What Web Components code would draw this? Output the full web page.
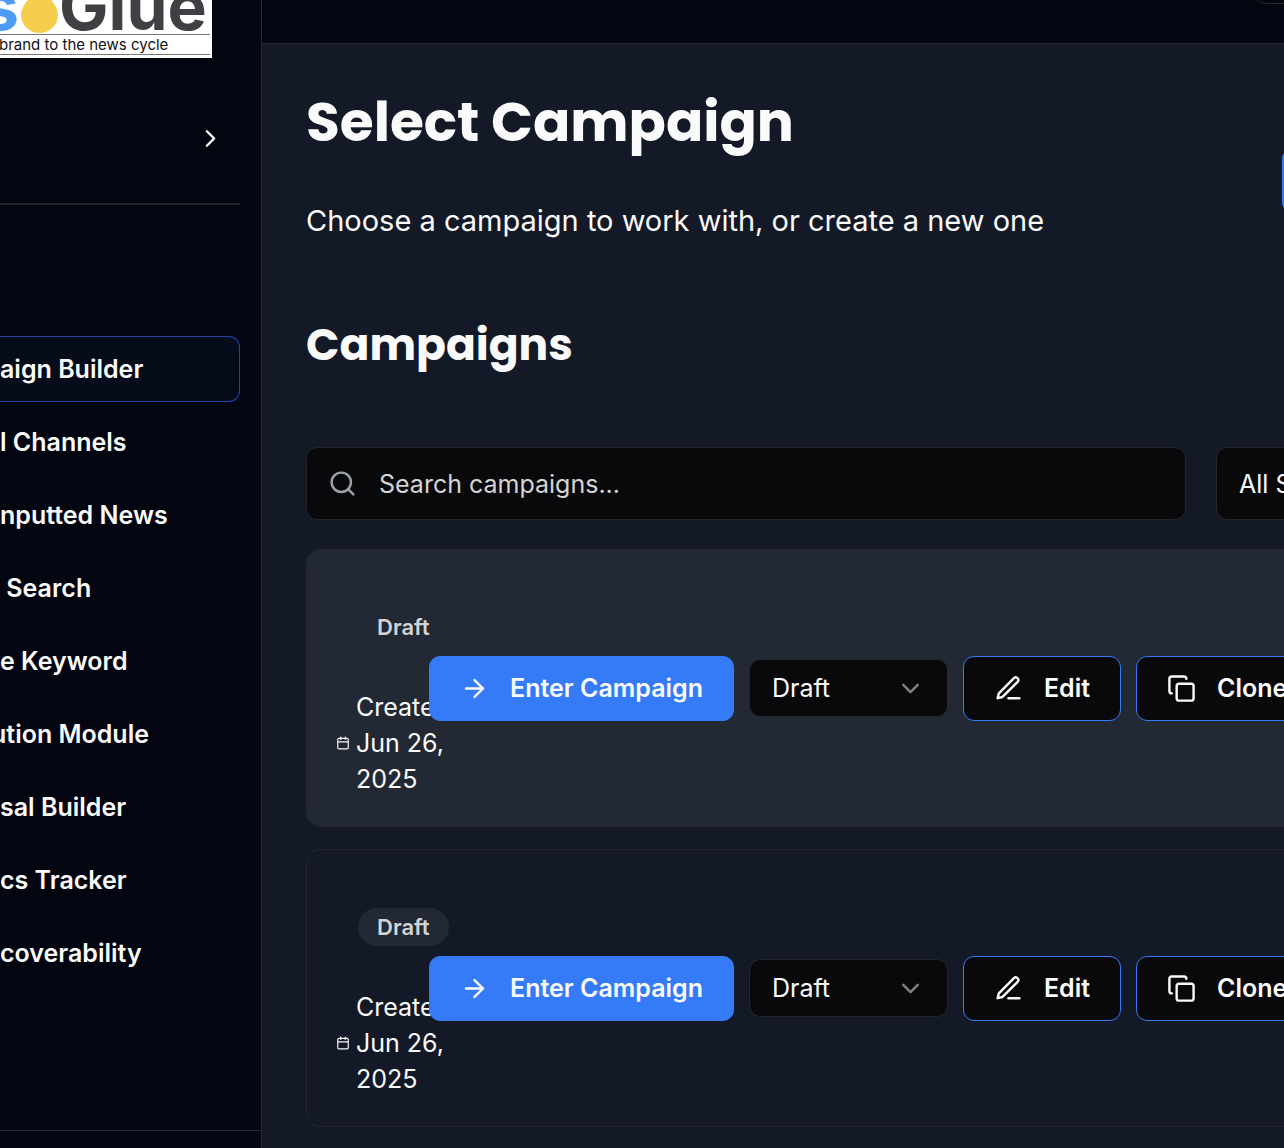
<!DOCTYPE html>
<html lang="en">
<head>
<meta charset="utf-8">
<meta name="viewport" content="width=device-width, initial-scale=1">
<title>Select Campaign</title>
<style>
  :root {
    --bg: #131926; --chrome: #030510; --line: #232935; --edge: #27272a;
    --field: #09090b; --raised: #222935; --text: #fafafa; --muted: #d4d4d4; --blue: #357af6;
  }
  html, body { margin: 0; height: 100%; background: var(--bg); }
  body { font: 400 25px/36px Inter, "Liberation Sans", sans-serif; color: var(--text); }
</style>
</head>
<body>
<app-shell>
  <app-sidebar slot="sidebar"></app-sidebar>
  <app-header slot="header"></app-header>
  <campaign-page></campaign-page>
</app-shell>

<script>
const define = (name, html, setup) => customElements.define(name, class extends HTMLElement {
  constructor() {
    super();
    const t = document.createElement('template');
    t.innerHTML = '<style>:host,*{box-sizing:border-box}:host([hidden]){display:none}</style>' + html;
    this.attachShadow({ mode: 'open' }).append(t.content.cloneNode(true));
  }
  connectedCallback() { if (setup) setup.call(this, this.shadowRoot); }
});

const icons = {
  chevronRight: '<path d="m9 18 6-6-6-6"/>',
  chevronDown: '<path d="m6 9 6 6 6-6"/>',
  search: '<circle cx="11" cy="11" r="8"/><path d="m21 21-4.3-4.3"/>',
  arrow: '<path d="M5 12h14"/><path d="m12 5 7 7-7 7"/>',
  pen: '<path d="M12 20h9"/><path d="M16.5 3.5a2.12 2.12 0 0 1 3 3L7 19l-4 1 1-4Z"/>',
  copy: '<rect width="14" height="14" x="8" y="8" rx="2"/><path d="M4 16c-1.1 0-2-.9-2-2V4c0-1.1.9-2 2-2h10c1.1 0 2 .9 2 2"/>',
  calendar: '<path d="M8 2v4"/><path d="M16 2v4"/><rect width="18" height="18" x="3" y="4" rx="2"/><path d="M3 10h18"/>'
};

define('app-icon', `
  <style>
    :host { display: block; flex: none; width: 29px; height: 29px; }
    svg { display: block; width: 100%; height: 100%; fill: none; stroke: currentColor; stroke-width: 2; stroke-linecap: round; stroke-linejoin: round; }
  </style>
  <svg viewBox="0 0 24 24" aria-hidden="true"></svg>`, function (root) {
  root.querySelector('svg').innerHTML = icons[this.getAttribute('name')];
});

define('app-shell', `
  <style>
    :host { display: flex; height: 100vh; overflow: hidden; }
    .body { flex: 1; min-width: 0; display: flex; flex-direction: column; overflow: hidden; }
    main { flex: 1; min-height: 0; overflow: hidden; }
  </style>
  <slot name="sidebar"></slot>
  <div class="body"><slot name="header"></slot><main><slot></slot></main></div>`);

define('brand-logo', `
  <style>
    :host { display: block; }
    svg { display: block; width: 212px; height: 58px; }
    text { font-family: Inter, "Liberation Sans", sans-serif; }
  </style>
  <svg viewBox="0 0 212 58" role="img" aria-label="Glue, brand to the news cycle">
    <rect width="212" height="58" fill="#fff"/>
    <g font-size="66" font-weight="700">
      <text x="-18" y="30" fill="#4f9bf8">s</text>
      <text x="59" y="30" fill="#3f4044">Glue</text>
    </g>
    <path d="M39.500-14C35-7 21 4 21 15a18.500 18 0 0 0 37 0C58 4 44-7 39.500-14Z" fill="#f5ce4e"/>
    <path d="M0 34.500h210M0 54.500h210" stroke="#777" stroke-width="1"/>
    <text x="-1" y="50" font-size="15" font-weight="400" fill="#111">brand to the news cycle</text>
  </svg>`);

define('nav-link', `
  <style>
    :host { display: block; }
    a { display: flex; align-items: center; height: 66px; border: 1px solid transparent; border-left: 0;
        border-radius: 0 11px 11px 0; color: inherit; font-weight: 600; text-decoration: none; white-space: pre; }
    :host([active]) a { background: #070c1a; border-color: #2341ab; }
    :host([bleed]) a { text-indent: -9px; }
  </style>
  <a href="#"><slot></slot></a>`);

define('app-sidebar', `
  <style>
    :host { display: flex; flex-direction: column; flex: none; width: 262px; overflow: hidden; background: var(--chrome); border-right: 1px solid var(--line); }
    .switch { display: flex; justify-content: flex-end; margin: 44px 21px 0 0; padding: 22px 15px 50px 0; border-bottom: 2px solid var(--edge); }
    button { padding: 0; border: 0; background: none; color: inherit; }
    nav { display: flex; flex-direction: column; gap: 7px; margin: 131px 21px 0 0; }
    footer { margin-top: auto; height: 18px; flex: none; border-top: 1px solid var(--line); }
  </style>
  <brand-logo></brand-logo>
  <div class="switch"><button aria-label="Expand"><app-icon name="chevronRight"></app-icon></button></div>
  <nav>
    <nav-link active>aign Builder</nav-link>
    <nav-link>l Channels</nav-link>
    <nav-link>nputted News</nav-link>
    <nav-link> Search</nav-link>
    <nav-link>e Keyword</nav-link>
    <nav-link bleed>ution Module</nav-link>
    <nav-link>sal Builder</nav-link>
    <nav-link>cs Tracker</nav-link>
    <nav-link>coverability</nav-link>
  </nav>
  <footer></footer>`);

define('app-header', `
  <style>
    :host { display: flex; flex: none; height: 44px; align-items: flex-end; justify-content: flex-end; padding-bottom: 39px;
            background: var(--chrome); border-bottom: 1px solid var(--line); }
    button { flex: none; width: 66px; height: 66px; margin-right: -34px; border: 1px solid var(--edge); border-radius: 14px; background: none; }
  </style>
  <button aria-label="Account"></button>`);

define('action-button', `
  <style>
    :host { display: block; flex: none; }
    button { display: flex; align-items: center; gap: 21px; height: 65px; padding: 0 30px; border: 1px solid var(--blue); border-radius: 11px;
             background: var(--field); color: var(--text); font: inherit; font-weight: 600; white-space: nowrap; }
    :host([primary]) button { background: var(--blue); }
  </style>
  <button><app-icon></app-icon><span><slot></slot></span></button>`, function (root) {
  const old = root.querySelector('app-icon');
  const icon = document.createElement('app-icon');
  icon.setAttribute('name', this.getAttribute('icon'));
  old.replaceWith(icon);
});

define('select-box', `
  <style>
    :host { display: grid; flex: none; align-items: center; width: 199px; height: 58px; }
    select, app-icon { grid-area: 1 / 1; }
    select { width: 100%; height: 100%; padding: 0 22px; border: 1px solid var(--edge); border-radius: 11px; appearance: none;
             background: var(--field); color: var(--text); font: inherit; }
    app-icon { justify-self: end; margin-right: 23px; color: #808080; pointer-events: none; }
  </style>
  <select><option></option></select><app-icon name="chevronDown"></app-icon>`, function (root) {
  root.querySelector('option').textContent = this.getAttribute('value');
  root.querySelector('select').setAttribute('aria-label', this.getAttribute('label'));
});

define('search-box', `
  <style>
    :host { display: block; flex: 1; min-width: 0; }
    label { display: flex; align-items: center; gap: 22px; height: 73px; padding: 0 21px; border: 1px solid var(--edge); border-radius: 11px; background: var(--field); }
    app-icon { color: #9ca3af; }
    input { flex: 1; min-width: 0; padding: 0; border: 0; outline: 0; background: none; color: var(--text); font: inherit; }
    input::placeholder { color: var(--muted); opacity: 1; }
  </style>
  <label><app-icon name="search"></app-icon><input type="text" placeholder="Search campaigns..." aria-label="Search campaigns"></label>`);

define('campaign-card', `
  <style>
    :host { display: flex; align-items: flex-end; padding: 29px; border: 1px solid var(--edge); border-radius: 15px; }
    :host([selected]) { background: var(--raised); }
    .info { flex: none; width: 93px; padding-top: 29px; }
    .badge { display: block; width: max-content; margin: 0 0 43px 22px; padding: 0 19px; border-radius: 19px;
             background: var(--raised); color: var(--muted); font-size: 22px; line-height: 38px; font-weight: 600; }
    .date { display: flex; align-items: center; gap: 6px; width: 110px; }
    .date app-icon { width: 14px; height: 14px; }
    .actions { flex: none; align-self: center; display: flex; align-items: center; gap: 15px; }
  </style>
  <div class="info">
    <span class="badge">Draft</span>
    <div class="date"><app-icon name="calendar"></app-icon><span>Created Jun 26, 2025</span></div>
  </div>
  <div class="actions">
    <action-button primary icon="arrow">Enter Campaign</action-button>
    <select-box value="Draft" label="Status"></select-box>
    <action-button icon="pen">Edit</action-button>
    <action-button icon="copy">Clone</action-button>
  </div>`);

define('campaign-page', `
  <style>
    :host { display: block; margin-right: -240px; padding: 38px 0 20px 44px; }
    header { display: flex; align-items: center; justify-content: space-between; }
    h1, h2, p { margin: 0; }
    h1, h2 { font-family: Poppins, Inter, sans-serif; font-weight: 700; }
    h1 { font-size: 55px; line-height: 80px; }
    p { margin: 37px 0 36px; font-size: 29px; line-height: 44px; }
    h2 { margin-top: 32px; font-size: 44px; line-height: 68px; }
    .new { flex: none; width: 242px; height: 65px; border: 0; border-radius: 11px; background: var(--blue); }
    .filters { display: flex; gap: 30px; margin: 68px 0 29px; }
    .filters select-box { width: 308px; height: 73px; }
    .list { display: flex; flex-direction: column; gap: 22px; }
  </style>
  <header>
    <div><h1>Select Campaign</h1><p>Choose a campaign to work with, or create a new one</p></div>
    <button class="new" aria-label="New campaign"></button>
  </header>
  <section>
    <h2>Campaigns</h2>
    <div class="filters"><search-box></search-box><select-box value="All Status" label="Filter by status"></select-box></div>
    <div class="list"><campaign-card selected></campaign-card><campaign-card></campaign-card></div>
  </section>`);
</script>
</body>
</html>
